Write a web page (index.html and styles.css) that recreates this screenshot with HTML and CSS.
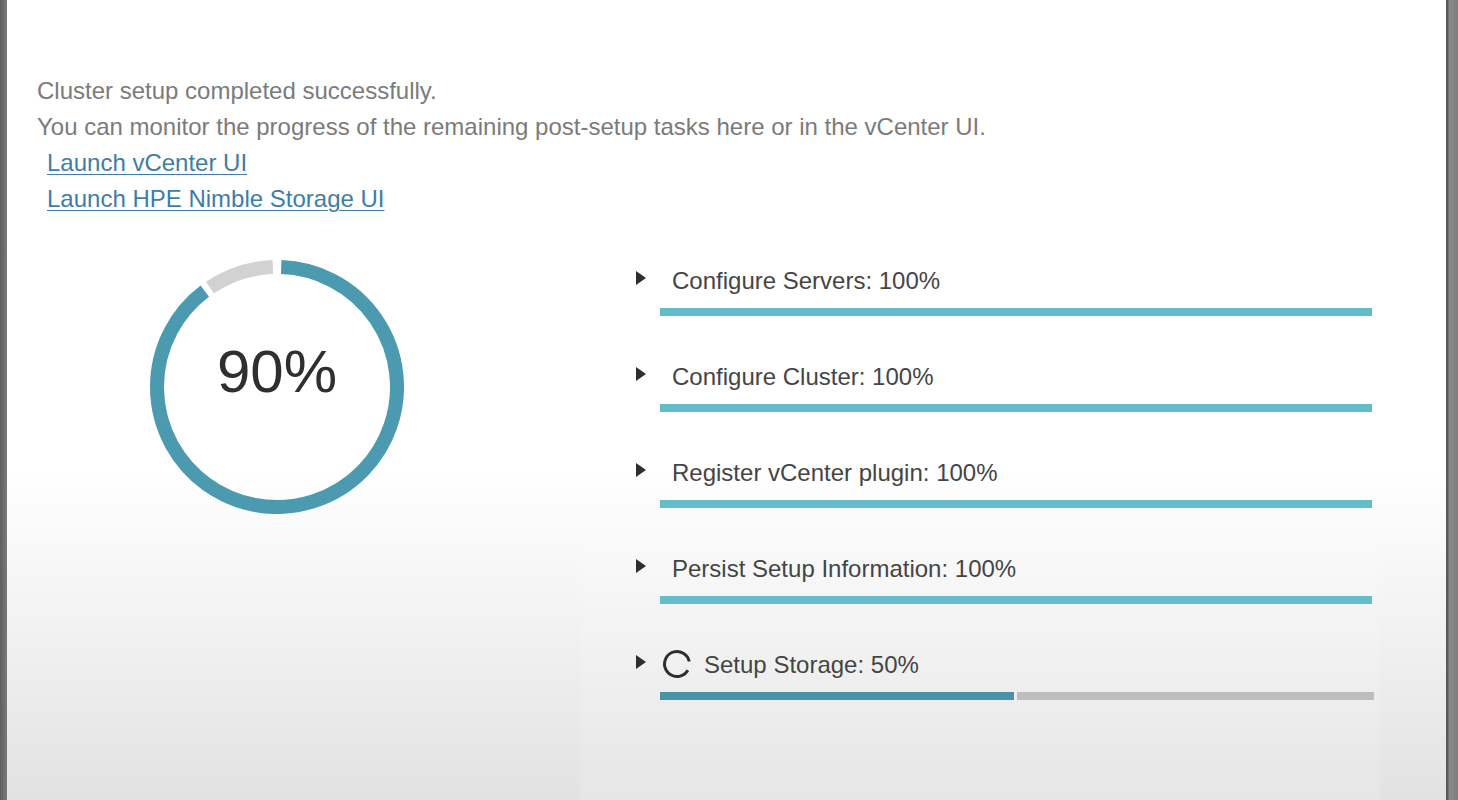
FILE: index.html
```html
<!DOCTYPE html>
<html>
<head>
<meta charset="utf-8">
<link rel="stylesheet" href="styles.css">
</head>
<body>
<div class="screen">
  <div class="edge-left"></div>
  <div class="modal">
    <div class="message">
      <p class="line">Cluster setup completed successfully.</p>
      <p class="line">You can monitor the progress of the remaining post-setup tasks here or in the vCenter UI.</p>
      <p class="line link-line"><a href="#" class="link">Launch vCenter UI</a></p>
      <p class="line link-line"><a href="#" class="link">Launch HPE Nimble Storage UI</a></p>
    </div>
    <div class="main">
      <div class="chart">
        <div class="ring">
          <svg width="254" height="254" viewBox="0 0 254 254">
            <path d="M131.19 7.07 A120 120 0 1 1 54.78 31.16" fill="none" stroke="#4b9aaf" stroke-width="14"/>
            <path d="M59.90 27.52 A120 120 0 0 1 122.81 7.07" fill="none" stroke="#d2d2d2" stroke-width="14"/>
          </svg>
          <div class="ring-label">90%</div>
        </div>
      </div>
      <div class="tasks">
        <div class="task">
          <div class="task-head"><span class="caret"></span><span class="task-name">Configure Servers: 100%</span></div>
          <div class="bar"><div class="bar-fill done" style="width:100%"></div></div>
        </div>
        <div class="task">
          <div class="task-head"><span class="caret"></span><span class="task-name">Configure Cluster: 100%</span></div>
          <div class="bar"><div class="bar-fill done" style="width:100%"></div></div>
        </div>
        <div class="task">
          <div class="task-head"><span class="caret"></span><span class="task-name">Register vCenter plugin: 100%</span></div>
          <div class="bar"><div class="bar-fill done" style="width:100%"></div></div>
        </div>
        <div class="task">
          <div class="task-head"><span class="caret"></span><span class="task-name">Persist Setup Information: 100%</span></div>
          <div class="bar"><div class="bar-fill done" style="width:100%"></div></div>
        </div>
        <div class="task">
          <div class="task-head"><span class="caret"></span>
            <svg class="spinner" width="30" height="30" viewBox="0 0 30 30">
              <circle cx="15" cy="15" r="12.5" fill="none" stroke="#2e2e2e" stroke-width="3" stroke-dasharray="69 9.5" transform="rotate(30 15 15)"/>
            </svg>
            <span class="task-name">Setup Storage: 50%</span></div>
          <div class="bar split"><div class="bar-fill active"></div><div class="bar-rest"></div></div>
        </div>
      </div>
    </div>
  </div>
  <div class="edge-right"></div>
</div>
</body>
</html>
```

FILE: styles.css
```css
html, body {
  margin: 0;
  padding: 0;
}
body {
  font-family: "Liberation Sans", Arial, sans-serif;
  background: #6a6a6a;
}
.screen {
  display: flex;
  width: 1458px;
  height: 800px;
  overflow: hidden;
}
.edge-left {
  width: 7px;
  background: linear-gradient(to right, #5f5f5f, #7a7a7a);
}
.edge-right {
  width: 12px;
  background: linear-gradient(to right, #5a5a5a 0, #5a5a5a 2px, #8a8a8a 3px, #7e7e7e 100%);
}
.modal {
  width: 1439px;
  height: 800px;
  background: linear-gradient(to bottom, #ffffff 0, #ffffff 470px, #f4f4f4 600px, #e2e2e2 800px);
}
.message {
  padding: 73px 0 0 30px;
}
.line {
  margin: 0;
  font-size: 24px;
  line-height: 36px;
  color: #7b7b7b;
  white-space: nowrap;
}
.link-line {
  padding-left: 10px;
}
.link {
  color: #3e7ea6;
  text-decoration: underline;
  text-underline-offset: 3px;
  text-decoration-thickness: 1px;
}
.main {
  display: flex;
  margin-top: 31px;
}
.chart {
  width: 430px;
  padding: 12px 0 0 143px;
}
.ring {
  position: relative;
  width: 254px;
  height: 254px;
}
.ring svg {
  display: block;
}
.ring-label {
  position: absolute;
  left: 0;
  right: 0;
  top: 82px;
  text-align: center;
  font-size: 60px;
  line-height: 60px;
  color: #2f2f2f;
}
.tasks {
  width: 744px;
  height: 560px;
  padding-left: 56px;
  background: rgba(255, 255, 255, 0.14);
}
.task {
  padding: 15px 0 28px 0;
}
.task-head {
  display: flex;
  align-items: center;
  height: 36px;
}
.caret {
  width: 0;
  height: 0;
  border-top: 7px solid transparent;
  border-bottom: 7px solid transparent;
  border-left: 10px solid #2e2e2e;
  margin: 0 26px 6px 0;
}
.spinner {
  margin: 0 12px 2px -10px;
}
.task-name {
  font-size: 24px;
  color: #454545;
  white-space: nowrap;
}
.bar {
  display: flex;
  margin: 9px 0 0 24px;
  width: 712px;
  height: 8px;
}
.bar-fill.done {
  background: #63bdcb;
  height: 8px;
}
.bar.split {
  width: 714px;
}
.bar-fill.active {
  width: 354px;
  background: #4a93a7;
}
.bar-rest {
  flex: 1;
  margin-left: 3px;
  background: #bdbdbd;
}
```
